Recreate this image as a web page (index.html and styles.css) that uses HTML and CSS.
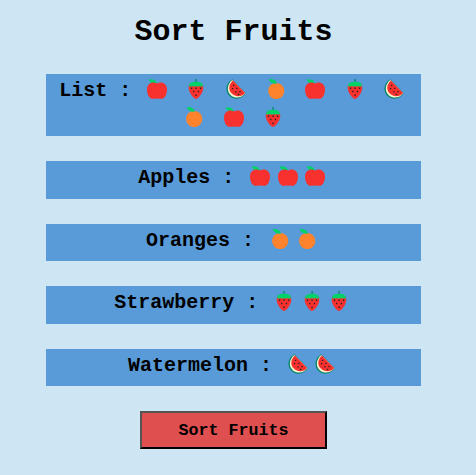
FILE: index.html
```html
<!DOCTYPE html>
<html lang="en">
<head>
<meta charset="utf-8">
<title>Sort Fruits</title>
<link rel="stylesheet" href="styles.css">
</head>
<body>
<svg class="defs" aria-hidden="true">
  <symbol id="apple" viewBox="0 0 20 20">
    <path fill="#00d26a" d="M1.8.4C5 .1 8.6.7 10 4.300 6.400 5 3.200 4.200 1.800.4Z"/>
    <path fill="#f8312f" d="M10 4.500C12 3.500 14.300 3.300 16 4c2.700 1 4 3.400 4 6.400 0 4.500-2.200 9.400-5.600 9.400-1.600 0-2.800-.3-4.400-.3s-2.800.3-4.400.3C2.200 19.800 0 14.900 0 10.400 0 7.400 1.300 5 4 4c1.700-.7 4-.5 6 .5Z"/>
  </symbol>
  <symbol id="orange" viewBox="0 0 20 20">
    <circle cx="10.200" cy="12" r="8.100" fill="#ff822d"/>
    <path fill="#00d26a" d="M2.800.1C7-.4 10 .9 10.900 4.500 7.300 5.200 3.900 4.300 2.800.1Z"/>
  </symbol>
  <symbol id="strawberry" viewBox="0 0 20 20">
    <path fill="#008463" d="M9.500 0h1.200V4H9.500Z"/>
    <path fill="#f8312f" d="M3.900 5h12.200c2 2.500 1.200 6.200-.2 8.800-1.600 3.100-4 6.100-5.900 6.100s-4.300-3-5.900-6.100C2.700 11.200 1.900 7.500 3.900 5Z"/>
    <path fill="#00d26a" d="M3 7.200C3.200 4 6 2.800 10 2.800S16.800 4 17 7.200c-1.400.7-3 .4-3.900-.3-.9.800-2.200.8-3.100 0-.9.800-2.200.8-3.100 0-.9.700-2.500 1-3.900.3Z"/>
    <path fill="#212121" d="M4.900 8.500h1.300v1.400H4.900Zm4.500 0h1.300v1.400H9.400Zm4.500 0h1.300v1.400h-1.300Zm-6.800 3.300h1.300v1.400H7.100Zm4.700 0h1.300v1.400h-1.300ZM9.400 15.500h1.300v1.400H9.400Z"/>
  </symbol>
  <symbol id="watermelon" viewBox="0 0 20 20">
    <path fill="#008463" d="M6.200.3 19.700 14.300c-3.600 6-11.500 7.300-16.300 2.500S-.1 4.100 6.200.3Z"/>
    <path fill="#fff4d0" d="m6.300 1 13 13.300c-3.600 4.900-10.400 5.700-14.800 1.600S1.500 4.900 6.300 1Z"/>
    <path fill="#f8312f" d="m6.900 1.400 12.200 12.500c-3.400 4.100-9.200 4.400-13.200.7S2.800 5.200 6.900 1.400Z"/>
    <path fill="#212121" d="M7 5.700h1.300V7H7Zm3.200 3h1.300V10h-1.300ZM5.900 8.900h1.300v1.300H5.900Zm7.500 3h1.300v1.300h-1.300Zm-4.100.3h1.300v1.300H9.300Zm2.600 2.500h1.300V16h-1.300Z"/>
  </symbol>
</svg>
<main class="sorter">
  <h1 class="title">Sort Fruits</h1>
  <div class="row row-list">List :
    <svg class="fruit"><use href="#apple"/></svg>
    <svg class="fruit"><use href="#strawberry"/></svg>
    <svg class="fruit"><use href="#watermelon"/></svg>
    <svg class="fruit"><use href="#orange"/></svg>
    <svg class="fruit"><use href="#apple"/></svg>
    <svg class="fruit"><use href="#strawberry"/></svg>
    <svg class="fruit"><use href="#watermelon"/></svg>
    <svg class="fruit"><use href="#orange"/></svg>
    <svg class="fruit"><use href="#apple"/></svg>
    <svg class="fruit"><use href="#strawberry"/></svg>
  </div>
  <div class="row">Apples : <svg class="fruit"><use href="#apple"/></svg><svg class="fruit"><use href="#apple"/></svg><svg class="fruit"><use href="#apple"/></svg></div>
  <div class="row">Oranges : <svg class="fruit"><use href="#orange"/></svg><svg class="fruit"><use href="#orange"/></svg></div>
  <div class="row">Strawberry : <svg class="fruit"><use href="#strawberry"/></svg><svg class="fruit"><use href="#strawberry"/></svg><svg class="fruit"><use href="#strawberry"/></svg></div>
  <div class="row">Watermelon : <svg class="fruit"><use href="#watermelon"/></svg><svg class="fruit"><use href="#watermelon"/></svg></div>
  <button class="sort-button">Sort Fruits</button>
</main>
</body>
</html>
```

FILE: styles.css
```css
* {
  box-sizing: border-box;
}

body {
  margin: 0;
  height: 475px;
  overflow: hidden;
  background: #cee6f3;
  color: #000;
  font-family: "Courier New", "Liberation Mono", monospace;
  font-weight: bold;
}

.defs {
  display: none;
}

.sorter {
  display: flex;
  flex-direction: column;
  gap: 25px;
  width: 375px;
  margin-left: 46px;
  padding-top: 14px;
  text-align: center;
}

.title {
  margin: 0;
  height: 34.5px;
  font-size: 30px;
  line-height: 36px;
}

.row {
  height: 37.5px;
  padding-top: 3px;
  background: #589bd8;
  font-size: 20px;
  line-height: 28px;
}

.row-list {
  height: 62.5px;
}

.fruit {
  width: 20px;
  height: 20px;
  margin: 0 3.75px;
  vertical-align: -3px;
}

.sort-button {
  align-self: center;
  width: 187.5px;
  height: 37.5px;
  padding: 1px 0 0;
  border: 2px outset #000;
  background: #df4f4f;
  color: #000;
  font: bold 16.67px "Courier New", "Liberation Mono", monospace;
}
```
